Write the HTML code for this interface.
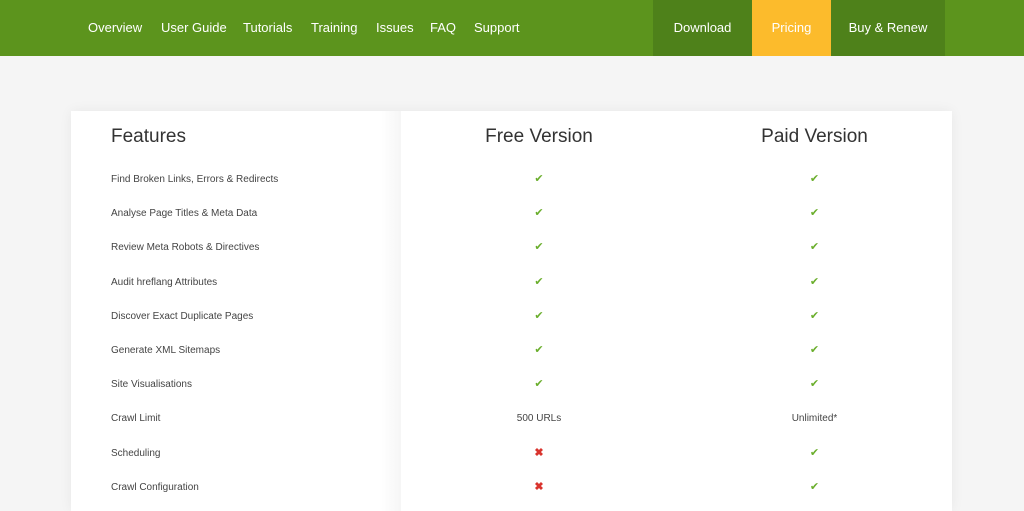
<!DOCTYPE html>
<html><head><style>
body{margin:0;width:1024px;height:488px;overflow:hidden;background:#f5f5f5;font-family:"Liberation Sans",sans-serif;}
.nav{height:56px;background:#5c941d;position:relative;}
.nav a{position:absolute;top:20px;color:#fff;font-size:13px;text-decoration:none;}
.box{position:absolute;top:0;height:56px;color:#fff;font-size:13px;text-align:center;line-height:56px;}
.card{position:absolute;left:71px;top:111px;width:881px;height:400px;background:#fff;box-shadow:0 0 12px rgba(0,0,0,.06);}
.col{position:absolute;top:0;height:400px;}
.h{position:absolute;top:15px;font-size:19px;color:#333;}
.r{position:absolute;font-size:10px;color:#444;}
.ck{color:#6aae2c;font-size:11px;}
.x{color:#d9342e;font-size:11px;font-weight:bold;}
</style></head><body>
<div class="nav">
<a style="left:88px">Overview</a><a style="left:161px">User Guide</a><a style="left:243px">Tutorials</a><a style="left:311px">Training</a><a style="left:376px">Issues</a><a style="left:430px">FAQ</a><a style="left:474px">Support</a>
<div class="box" style="left:653px;width:99px;background:#4e811a">Download</div>
<div class="box" style="left:752px;width:79px;background:#fcbb2c">Pricing</div>
<div class="box" style="left:831px;width:114px;background:#4e811a">Buy &amp; Renew</div>
</div>
<div class="card">
<div class="h" style="left:40px">Features</div>
<div class="h" style="left:330px;width:276px;text-align:center;">Free Version</div>
<div class="h" style="left:606px;width:275px;text-align:center;">Paid Version</div>
<div class="col" style="left:310px;width:20px;background:linear-gradient(90deg,#fff,#f6f6f6)"></div>
</div>
<div id="rows"></div>
<script>
var f=["Find Broken Links, Errors & Redirects","Analyse Page Titles & Meta Data","Review Meta Robots & Directives","Audit hreflang Attributes","Discover Exact Duplicate Pages","Generate XML Sitemaps","Site Visualisations","Crawl Limit","Scheduling","Crawl Configuration"];
var h="";
for(var i=0;i<f.length;i++){var y=172+i*34.2;
var a=i<7?'<span class="ck">✔</span>':i==7?'500 URLs':'<span class="x">✖</span>';
var b=i==7?'Unlimited*':'<span class="ck">✔</span>';
h+='<div class="r" style="left:111px;top:'+(y+2)+'px">'+f[i].replace("&","&amp;")+'</div>';
h+='<div class="r" style="left:401px;width:276px;text-align:center;top:'+(i==7?y+2:y)+'px">'+a+'</div>';
h+='<div class="r" style="left:677px;width:275px;text-align:center;top:'+(i==7?y+2:y)+'px">'+b+'</div>';}
document.getElementById("rows").innerHTML=h;
</script>
</body></html>
